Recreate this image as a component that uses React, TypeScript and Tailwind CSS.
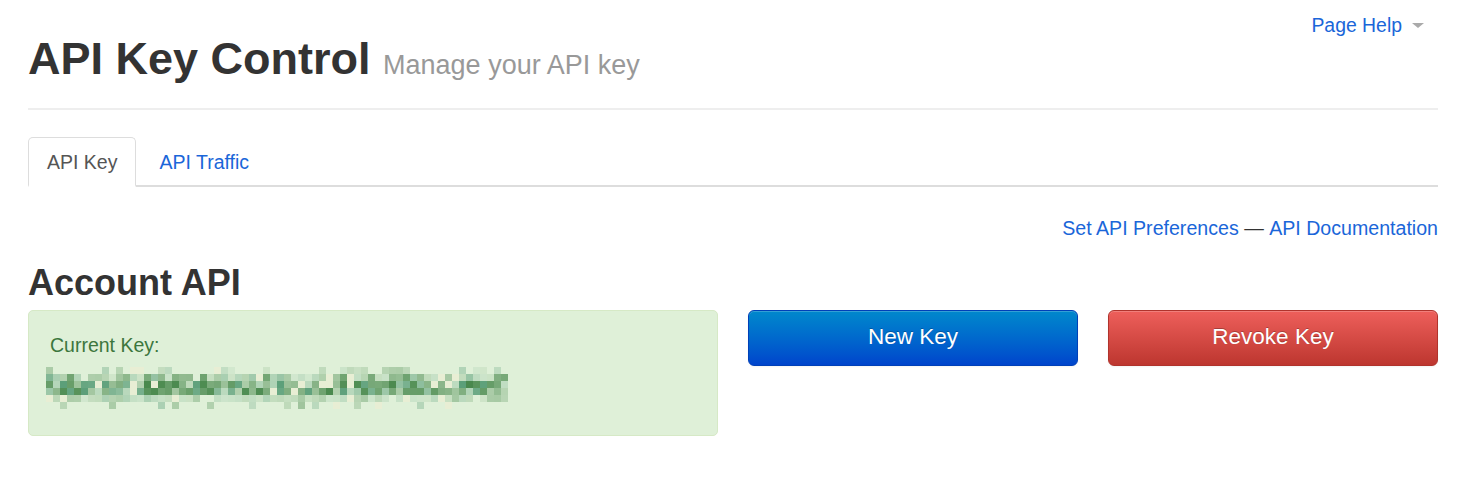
import React from "react";

const font = { fontFamily: '"Liberation Sans", Arial, Helvetica, sans-serif' };

// blurred-out key, drawn as a pixel mosaic
const CELL = 7;
const COLS = 66;
const rowRange: [number, number, number][] = [
  // [chance, min, max]
  [0.4, 0.1, 0.35],
  [0.95, 0.1, 0.75],
  [1, 0.2, 1],
  [1, 0.25, 1],
  [0.95, 0.08, 0.4],
  [0.15, 0.2, 0.5],
];

function buildMosaic() {
  let seed = 4242;
  const rnd = () => {
    seed = (seed * 16807) % 2147483647;
    return seed / 2147483647;
  };
  const cells: { x: number; y: number; fill: string }[] = [];
  const base = [223, 240, 216];
  rowRange.forEach(([chance, min, max], row) => {
    for (let col = 0; col < COLS; col++) {
      if (rnd() > chance) continue;
      let t = min + rnd() * (max - min);
      const pale = rnd() > 0.9;
      const teal = rnd() > 0.6;
      const dark = pale ? [232, 238, 212] : teal ? [90, 158, 120] : [72, 136, 76];
      if (pale) t = 1;
      const c = base.map((b, i) => Math.round(b + (dark[i] - b) * t));
      cells.push({ x: col * CELL, y: row * CELL, fill: `rgb(${c[0]},${c[1]},${c[2]})` });
    }
  });
  return cells;
}

const mosaic = buildMosaic();

const KeyMosaic: React.FC = () => (
  <svg width={COLS * CELL} height={rowRange.length * CELL} className="block">
    {mosaic.map((c, i) => (
      <rect key={i} x={c.x} y={c.y} width={CELL} height={CELL} fill={c.fill} />
    ))}
  </svg>
);

const App: React.FC = () => {
  return (
    <div className="min-h-screen bg-white text-[#333]" style={font}>
      <div className="w-[1410px] ml-[28px]">
        <header className="flex items-start justify-between pb-[24px] border-b-2 border-[#eeeeee]">
          <h1 className="mt-[34px] text-[45px] leading-[1.1] font-bold text-[#333]">
            API Key Control{" "}
            <small className="text-[27px] font-normal text-[#999]">Manage your API key</small>
          </h1>
          <a className="mt-[11px] mr-[14px] flex items-center text-[19.4px] leading-[28px] text-[#1a66d9] cursor-pointer">
            Page Help
            <span className="ml-[10px] w-0 h-0 border-t-[5px] border-x-[6px] border-x-transparent border-t-[#aaaaaa]" />
          </a>
        </header>

        <ul className="mt-[27px] flex border-b-2 border-[#dddddd] text-[19.5px] leading-[24px]">
          <li className="-mb-[2px]">
            <a className="block px-[18px] pt-[12px] pb-[11px] bg-white border border-b-2 border-[#dddddd] border-b-white rounded-t-[5px] text-[#555]">
              API Key
            </a>
          </li>
          <li className="ml-[4px] -mb-[2px]">
            <a className="block px-[18px] pt-[12px] pb-[11px] border border-b-2 border-transparent text-[#1a66d9] cursor-pointer">
              API Traffic
            </a>
          </li>
        </ul>

        <div className="mt-[27px] flex justify-end text-[19.6px] leading-[28px] text-[#1a66d9]">
          <a className="cursor-pointer">Set API Preferences</a>
          <span className="text-[#333]">&nbsp;—&nbsp;</span>
          <a className="cursor-pointer">API Documentation</a>
        </div>

        <h2 className="mt-[21px] text-[36px] leading-[39px] font-bold text-[#333]">Account API</h2>

        <div className="mt-[8px] grid grid-cols-12 gap-x-[30px] items-start">
          <div className="col-span-6 h-[126px] rounded-[5px] border border-[#d6e9c6] bg-[#dff0d8] pl-[21px] pt-[20px]">
            <div className="text-[19.5px] leading-[28px] text-[#3c763d]">Current Key:</div>
            <div className="mt-[8px] -ml-[4px]">
              <KeyMosaic />
            </div>
          </div>
          <div className="col-span-3">
            <button className="w-full h-[56px] rounded-[6px] border border-[#0040b8] bg-linear-to-b from-[#0088cc] to-[#0044cc] text-white text-[22.5px] leading-[28px] pb-[2px] shadow-[inset_0_1px_0_rgba(255,255,255,0.2),0_1px_2px_rgba(0,0,0,0.05)] [text-shadow:0_-1px_0_rgba(0,0,0,0.25)]">
              New Key
            </button>
          </div>
          <div className="col-span-3">
            <button className="w-full h-[56px] rounded-[6px] border border-[#b0332c] bg-linear-to-b from-[#ee5f5b] to-[#bd362f] text-white text-[22.5px] leading-[28px] pb-[2px] shadow-[inset_0_1px_0_rgba(255,255,255,0.2),0_1px_2px_rgba(0,0,0,0.05)] [text-shadow:0_-1px_0_rgba(0,0,0,0.25)]">
              Revoke Key
            </button>
          </div>
        </div>
      </div>
    </div>
  );
};

export default App;
